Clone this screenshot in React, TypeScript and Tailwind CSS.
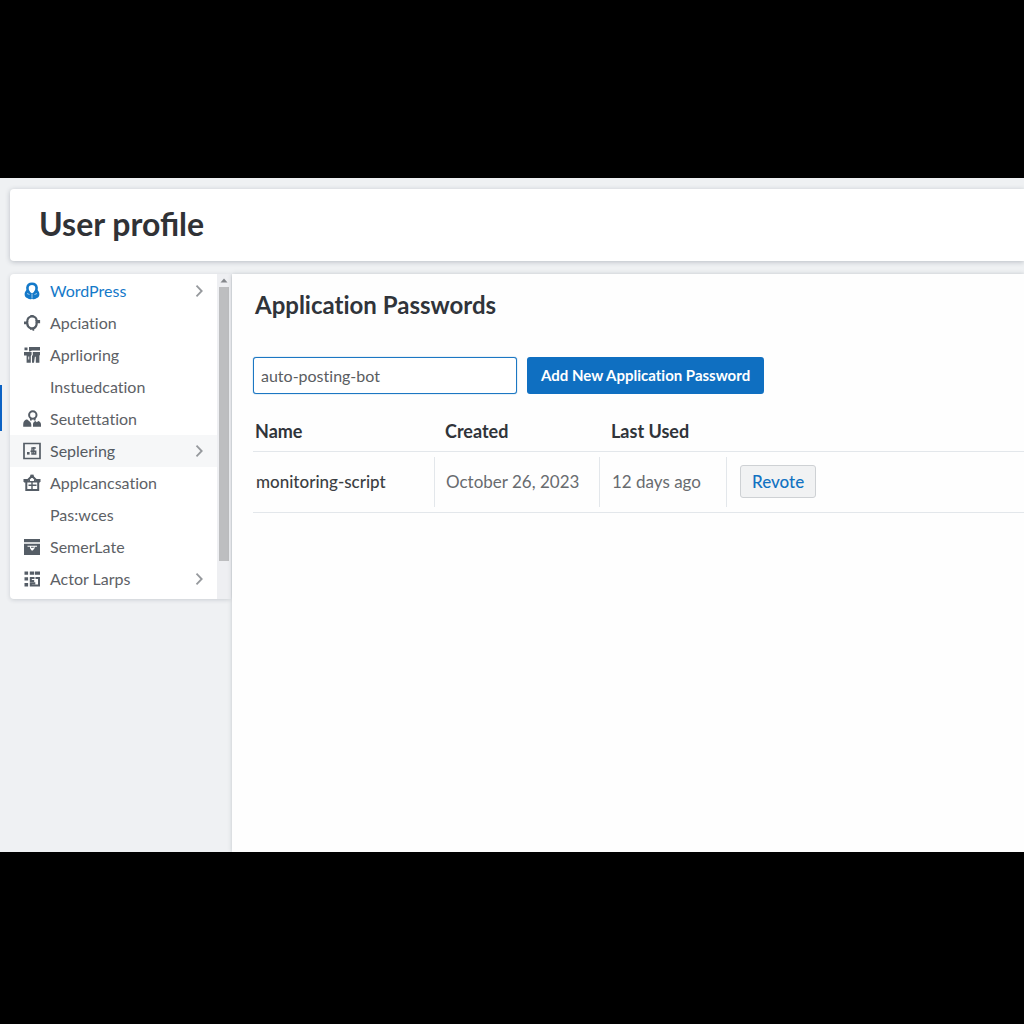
import { useState } from "react";
import type { ReactNode } from "react";

type Item = { label: string; icon?: ReactNode; arrow?: boolean; state?: "link" | "current" };

function Glyph({ children }: { children: ReactNode }) {
  return (
    <svg viewBox="0 0 18 18" className="size-[18px]" fill="currentColor" aria-hidden="true">
      {children}
    </svg>
  );
}

const line = { fill: "none", stroke: "currentColor" } as const;

const items: Item[] = [
  {
    label: "WordPress",
    arrow: true,
    state: "link",
    icon: (
      <Glyph>
        <path {...line} strokeWidth="2.6" d="M6 10.500C4.700 9 4.200 7.400 4.400 5.700 4.800 3 6.600 1.800 9 1.800s4.200 1.200 4.600 3.900c.2 1.700-.3 3.300-1.600 4.800" />
        <path d="M3.500 8 6.500 9.500 9 11.500l2.500-2L14.500 8c1.200 1.200 1.900 2.500 1.900 4.300 0 2.200-1.400 3.500-3 3.900-1 .9-2.800 1-4.400.9-1.600.1-3.400 0-4.400-.9-1.600-.4-3-1.700-3-3.900C1.600 10.500 2.300 9.200 3.500 8Z" />
        <path stroke="#fff" strokeWidth=".6" fill="none" d="M4 11.500 6.500 12.500M11.500 12.500l2.500-1M9 12v4.500" />
      </Glyph>
    ),
  },
  {
    label: "Apciation",
    icon: (
      <Glyph>
        <path {...line} strokeWidth="2.200" d="M4.200 8C4 4.500 6 2.500 9 2.500s4.700 1.700 4.700 4.500M4.200 9.500c.2 2.600 1.500 4.300 3.800 5M13.700 8.500c.2 3-1.200 5.300-4 6.200" />
        <path d="M1 7.600h4.300v2.700H1zM12.500 6h4.600v3.200h-4.600zM7 13.200h4.200v3.600H9.500v-1H7zM7.300 1h3.400v2H7.300z" />
      </Glyph>
    ),
  },
  {
    label: "Aprlioring",
    icon: (
      <Glyph>
        <path d="M1.500 1.500h3v2.700h-3zM6 1h11v3.400H9L7 5.600H6zM1 6h7.600v2.800L7.800 10v6.800H3.600V9.600H1zM9.800 6H17v3.200h-.6v7.600h-3.600v-6h-.9L11 16.800H9V9.600h.8z" />
        <path fill="#fff" d="M5.300 10.500h.9v3h-.9z" />
      </Glyph>
    ),
  },
  { label: "Instuedcation" },
  {
    label: "Seutettation",
    icon: (
      <Glyph>
        <circle {...line} strokeWidth="2" cx="9.800" cy="5" r="3.700" />
        <path {...line} strokeWidth="1.800" d="M7.900 8v2.500M11.700 8v2.500" />
        <path d="M.2 16.800v-2.300c0-2.300 1-4 2.500-4.700 1.200-.5 2.200-.1 3 1 1.300.9 2.600 2 2.600 4v2zM10 16.800v-2.500c0-1.800 1.200-2.800 2.400-3.300l1.400 1.300 1.500-1.300c1.600.6 2.700 1.800 2.700 3.600v2.200z" />
      </Glyph>
    ),
  },
  {
    label: "Seplering",
    arrow: true,
    state: "current",
    icon: (
      <Glyph>
        <path {...line} strokeWidth="1.700" d="M1 1.500h16v15H1z" />
        <path d="M4 10h2.600v2.600H4z" />
        <path {...line} strokeWidth="1.400" d="M12.800 6H9v6h3.700V9.300H7.500M10.800 5v7.500" />
      </Glyph>
    ),
  },
  {
    label: "Applcancsation",
    icon: (
      <Glyph>
        <path {...line} strokeWidth="2" d="M1.500 8V5.900h3.400L9 2l4.100 3.900h3.400V8M3.300 7.500V16h11.900V7.500" />
        <path {...line} strokeWidth="1.400" d="M1 7.700h16M5.500 11.300h8M9 8.500V16M6.300 5.500v2M11.700 5.500v2" />
        <path d="M7.300.7h3.400v3H7.300z" />
      </Glyph>
    ),
  },
  { label: "Pas:wces" },
  {
    label: "SemerLate",
    icon: (
      <Glyph>
        <path d="M1 1h16v3.200H1zM1 5.800h16V17H1z" />
        <path fill="#fff" d="M4.500 7.800H14v1H11.600v1.500l-1.800 2.200H8.600L7 10.300V8.800H4.500z" />
        <path d="M8 8.800h2.700v1H8z" />
      </Glyph>
    ),
  },
  {
    label: "Actor Larps",
    arrow: true,
    icon: (
      <Glyph>
        <path d="M1.500 1.500h3.600v3.200H1.500zM6.800 1.500h4.400v3.200H6.800zM12 1.500h5v3.200h-5zM1.500 7.300h3.600v3.200H1.500zM1.500 13h3.600v3.500H1.500z" />
        <path {...line} strokeWidth="2" d="M11.500 8H7.800v3h3.400M12.500 8H16v7.500H7.800v-2.300h4.500" />
      </Glyph>
    ),
  },
];

function Sidebar() {
  return (
    <div className="flex rounded-sm bg-white shadow-[0_1px_4px_rgba(60,70,85,0.2)]">
      <nav aria-label="Profile sections" className="min-w-0 flex-1 pt-px pb-1">
        {items.map((item) => (
          <a
            key={item.label}
            href="#"
            className={
              "flex h-8 items-center pr-3 pl-[13px] text-base " +
              (item.state === "link"
                ? "text-[#1479c9]"
                : item.state === "current"
                  ? "bg-[#f6f7f8] text-[#555b62]"
                  : "text-[#5d6166]")
            }
          >
            <span className={"w-[27px] shrink-0 " + (item.state === "link" ? "" : "text-[#555d66]")}>{item.icon}</span>
            <span className="flex-1 whitespace-nowrap">{item.label}</span>
            {item.arrow && (
              <svg viewBox="0 0 12 12" className="size-3 text-[#96999d]" fill="none" stroke="currentColor" strokeWidth="1.800" aria-hidden="true">
                <path d="m3.500.7 5.200 5.300-5.200 5.300" />
              </svg>
            )}
          </a>
        ))}
      </nav>
      <div className="flex w-[14px] flex-col items-center bg-[#eeeff2] pt-1">
        <svg viewBox="0 0 8 5" className="h-[5px] w-2" aria-hidden="true">
          <path fill="#85888c" d="M4 .5 7.500 4.500H.5z" />
        </svg>
        <div className="mt-1 mb-[38px] w-[10px] flex-1 bg-[#bdbec0]" />
      </div>
    </div>
  );
}

function PasswordTable() {
  return (
    <table className="mt-[17px] w-full table-fixed border-collapse text-left text-[17px] leading-6">
      <colgroup>
        <col className="w-[181px]" />
        <col className="w-[165px]" />
        <col className="w-[127px]" />
        <col />
      </colgroup>
      <thead>
        <tr className="h-10 border-b border-[#e3e7eb] text-lg leading-6 text-[#30343a]">
          <th className="pl-0.5 font-bold">Name</th>
          <th className="pl-[11px] font-bold">Created</th>
          <th className="pl-3 font-bold">Last Used</th>
          <th aria-label="Action" />
        </tr>
      </thead>
      <tbody>
        <tr className="border-b border-[#e3e7eb] text-[#686b6f]">
          <td className="py-[5px] pl-[3px] font-medium text-[#3b3e43]">monitoring-script</td>
          <td className="py-[5px]">
            <div className="flex h-[50px] items-center border-l border-[#e3e7eb] pl-[11px]">October 26, 2023</div>
          </td>
          <td className="py-[5px]">
            <div className="flex h-[50px] items-center border-l border-[#e3e7eb] pl-3">12 days ago</div>
          </td>
          <td className="py-[5px]">
            <div className="flex h-[50px] items-center border-l border-[#e3e7eb] pl-[13px]">
              <button type="button" className="h-[33px] rounded-[3px] border border-[#ced1d4] bg-[#f1f2f3] px-[11px] font-medium text-[#1272c2]">
                Revote
              </button>
            </div>
          </td>
        </tr>
      </tbody>
    </table>
  );
}

export default function App() {
  const [name, setName] = useState("auto-posting-bot");
  return (
    <div className="grid h-screen grid-rows-[178px_1fr_172px] bg-black font-['Lato','Noto_Sans',sans-serif] [font-variant-ligatures:no-common-ligatures]">
      <div className="relative row-start-2 flex flex-col overflow-hidden bg-[#eff1f3] pt-[11px] pl-[10px]">
        <div className="absolute top-[207px] left-0 h-[46px] w-0.5 bg-[#0b62c4]" />
        <header className="flex h-[72px] shrink-0 items-center rounded-l-sm bg-white pb-0.5 pl-[29px] shadow-[0_1px_5px_rgba(60,70,85,0.3)]">
          <h1 className="text-[32px] leading-10 font-bold text-[#303236] [font-variant-ligatures:normal]">User profile</h1>
        </header>
        <div className="mt-[13px] flex min-h-0 flex-1">
          <aside className="w-[221px] shrink-0">
            <Sidebar />
          </aside>
          <main className="ml-px min-w-0 flex-1 bg-[#fefefe] pt-[15px] pl-[21px] shadow-[0_0_4px_rgba(60,70,85,0.25)]">
            <h2 className="pl-0.5 text-2xl leading-8 font-bold text-[#30343a]">Application Passwords</h2>
            <form className="mt-9 flex gap-[10px]" onSubmit={(e) => e.preventDefault()}>
              <input
                type="text"
                aria-label="New application password name"
                value={name}
                onChange={(e) => setName(e.target.value)}
                className="h-[37px] w-[264px] rounded-[3px] border border-[#1c77c3] bg-white px-[7px] text-base text-[#5a5d61] shadow-[0_0_1px_#1c77c3] outline-none"
              />
              <button type="submit" className="h-[37px] rounded-[3px] bg-[#0f6fc1] px-[14px] text-[15px] font-bold text-white">
                Add New Application Password
              </button>
            </form>
            <PasswordTable />
          </main>
        </div>
      </div>
    </div>
  );
}
